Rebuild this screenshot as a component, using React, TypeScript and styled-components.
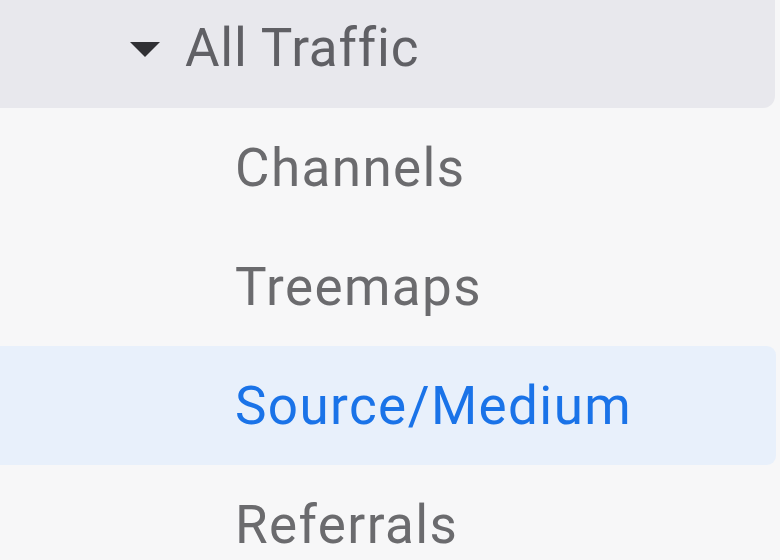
import React from 'react'
import styled, { createGlobalStyle } from 'styled-components'

const GlobalStyle = createGlobalStyle`
  html, body {
    margin: 0;
    padding: 0;
    background: #f7f7f8;
    font-family: Roboto, 'Liberation Sans', sans-serif;
    overflow: hidden;
  }
`

const Nav = styled.nav`
  width: 780px;
  height: 560px;
  display: flex;
  flex-direction: column;
  background: #f7f7f8;
  overflow: hidden;
`

const Header = styled.div`
  height: 108px;
  flex: none;
  display: flex;
  align-items: center;
  padding: 0 0 12px 130px;
  box-sizing: border-box;
  background: #e8e8ed;
  border-radius: 0 0 12px 0;
  margin-right: 5px;
  color: #606065;
  font-size: 53px;
  letter-spacing: 0.8px;
`

const Caret = styled.svg`
  width: 30px;
  height: 15px;
  margin-right: 25px;
  margin-top: 2px;
`

const Item = styled.div<{ $active?: boolean }>`
  height: 119px;
  flex: none;
  display: flex;
  align-items: center;
  padding-left: 235px;
  box-sizing: border-box;
  margin-right: 4px;
  border-radius: 0 9px 9px 0;
  font-size: 53px;
  letter-spacing: 1.4px;
  color: ${(p) => (p.$active ? '#1a73e8' : '#6b6b6e')};
  background: ${(p) => (p.$active ? '#e8f0fb' : 'transparent')};
`

const items = ['Channels', 'Treemaps', 'Source/Medium', 'Referrals']

export default function App() {
  return (
    <>
      <GlobalStyle />
      <Nav>
        <Header>
          <Caret viewBox="0 0 30 15">
            <path d="M0 0 H30 L15 15 Z" fill="#303034" />
          </Caret>
          All Traffic
        </Header>
        {items.map((label) => (
          <Item key={label} $active={label === 'Source/Medium'}>
            {label}
          </Item>
        ))}
      </Nav>
    </>
  )
}
